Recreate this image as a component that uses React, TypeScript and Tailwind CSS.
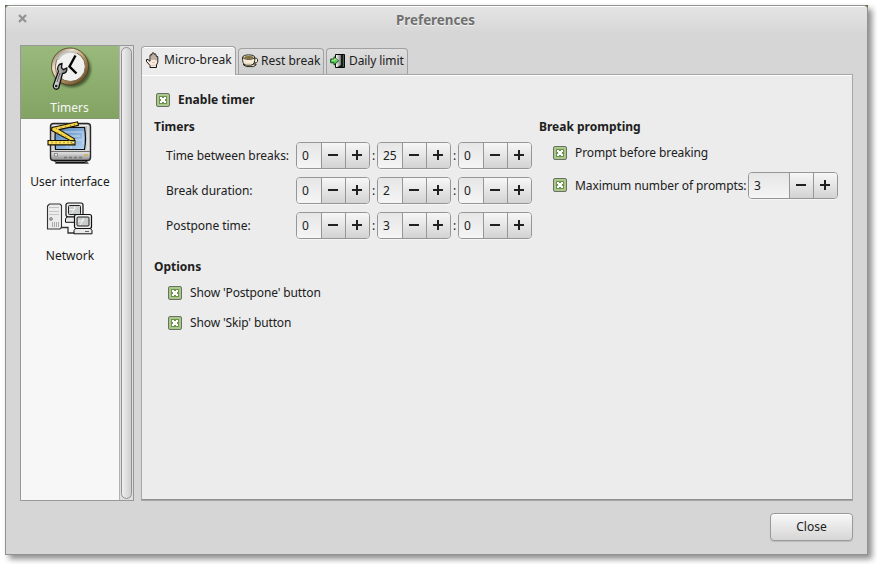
import React from "react";

function Check() {
  return (
    <svg className="h-[14px] w-[14px] shrink-0" viewBox="0 0 14 14" shapeRendering="crispEdges">
      <rect x="0.5" y="0.5" width="13" height="13" rx="1.5" fill="#a9c98a" stroke="#6b6f66" shapeRendering="auto" />
      <rect x="3" y="3" width="8" height="8" fill="#6f9151" />
      <path d="M4 4h2v1h2V4h2v2H9v2h1v2H8V9H6v1H4V8h1V6H4z" fill="#fff" />
    </svg>
  );
}

function CheckRow({ label, bold = false, low = false }: { label: string; bold?: boolean; low?: boolean }) {
  return (
    <div className={bold ? "flex h-5 items-center gap-2 font-bold tracking-[0.03px]" : "flex h-5 items-center gap-2"}>
      <Check />
      <span className={low ? "whitespace-nowrap pt-[2px]" : "whitespace-nowrap"}>{label}</span>
    </div>
  );
}

function Sign({ plus = false }: { plus?: boolean }) {
  return (
    <button className="flex h-full w-6 items-start border-l border-[#969696] bg-linear-to-b from-[#f7f7f7] to-[#d3d3d3] pl-[6px] pt-[7px]">
      <svg className="h-[10px] w-[10px]" viewBox="0 0 10 10" shapeRendering="crispEdges">
        <path d={plus ? "M0 4h4V0h2v4h4v2H6v4H4V6H0z" : "M0 4h10v2H0z"} fill="#202020" />
      </svg>
    </button>
  );
}

function Spin({ value, wide = false }: { value: number; wide?: boolean }) {
  return (
    <div
      className={
        (wide ? "w-[90px]" : "w-[74px]") +
        " flex h-[27px] shrink-0 overflow-hidden rounded-[4px] border border-[#969696] shadow-[0_1px_0_#f5f5f5]"
      }
    >
      <div className="flex flex-1 items-center bg-linear-to-b from-[#e6e6e6] to-[#f5f5f5] pl-[5px]">{value}</div>
      <Sign />
      <Sign plus />
    </div>
  );
}

function TimeRow({ label, values }: { label: string; values: number[] }) {
  return (
    <div className="flex h-[27px] items-center">
      <span className="w-[130px] whitespace-nowrap tracking-[-0.04px]">{label}</span>
      <Spin value={values[0]} />
      <span className="w-[7px] text-center">:</span>
      <Spin value={values[1]} />
      <span className="w-[7px] text-center">:</span>
      <Spin value={values[2]} />
    </div>
  );
}

function ClockIcon() {
  return (
    <svg className="h-[48px] w-[48px]" viewBox="0 0 48 48">
      <defs>
        <linearGradient id="rim" x1="0" y1="0" x2="1" y2="1">
          <stop offset="0" stopColor="#5c4a30" />
          <stop offset=".3" stopColor="#efe4cd" />
          <stop offset=".6" stopColor="#a98a5b" />
          <stop offset="1" stopColor="#4a3415" />
        </linearGradient>
        <linearGradient id="steel" x1="0" y1="0" x2="1" y2="0">
          <stop offset="0" stopColor="#e4e4e4" />
          <stop offset="1" stopColor="#777" />
        </linearGradient>
        <filter id="soft" x="-30%" y="-30%" width="160%" height="160%">
          <feGaussianBlur stdDeviation="1.3" />
        </filter>
      </defs>
      <ellipse cx="26" cy="22" rx="19" ry="18.5" fill="#263518" opacity=".65" filter="url(#soft)" />
      <circle cx="24" cy="19.5" r="18.5" fill="url(#rim)" stroke="#4d3b20" strokeWidth=".8" />
      <circle cx="24.3" cy="19.5" r="15" fill="#f0f0ee" stroke="#806d4c" />
      <path d="M12 12.5a14 14 0 0 1 19-6" fill="none" stroke="#c7c7c5" strokeWidth="2" />
      <path d="M29.5 8.5 23.5 19.5l7 7" fill="none" stroke="#050505" strokeWidth="2.4" />
      <path
        d="M16 16.5c-4 .5-5.3 4.5-3.6 8L7.5 38c-.5 2 .5 4 2.5 4.2 1.8.2 2.7-.6 3-2.2l3.5-13.5c3 0 5-2.2 4.3-5.5l-3.4 1.6-1.9-1.9z"
        fill="url(#steel)"
        stroke="#101010"
        strokeWidth="1.3"
      />
      <circle cx="10.2" cy="39" r="1.3" fill="#222" />
      <path d="m14 26-3 9" stroke="#4b4b4b" strokeWidth=".8" />
    </svg>
  );
}

function MonitorIcon() {
  return (
    <svg className="h-[48px] w-[48px]" viewBox="0 0 48 48">
      <defs>
        <linearGradient id="screen" x1="0" y1="0" x2="1" y2="1">
          <stop offset="0" stopColor="#4f82b9" />
          <stop offset="1" stopColor="#b9d7f2" />
        </linearGradient>
        <linearGradient id="case" x1="0" y1="0" x2="0" y2="1">
          <stop offset="0" stopColor="#bdbdbd" />
          <stop offset=".8" stopColor="#dadada" />
          <stop offset="1" stopColor="#888" />
        </linearGradient>
      </defs>
      <path d="M10 41h31l2 3H9z" fill="#222" opacity=".7" />
      <rect x="4.5" y="3.5" width="40" height="37" rx="3" fill="url(#case)" stroke="#292929" strokeWidth="1.4" />
      <path d="M6 5.5h36v24" fill="none" stroke="#eee" strokeWidth="1" />
      <path d="M9.5 7.5h29q2 11 0 22h-29q-1-11 0-22z" fill="url(#screen)" stroke="#111" strokeWidth="1.2" />
      <path d="M21 27V16h13M25 29V20h11M18 12h19v12" fill="none" stroke="#d9eaff" strokeWidth="1.4" opacity=".5" />
      <path d="M5 31.5h39" stroke="#707070" />
      <rect x="8.5" y="33.5" width="3" height="2.5" fill="#eee" stroke="#777" strokeWidth=".7" />
      <path d="M18 37.5h3m2 0h3m2 0h3m2 0h3" stroke="#777" strokeWidth="1.4" />
      <path d="M38 35h4" stroke="#d0b66c" strokeWidth="2" />
      <path d="M8 40.5h33l-2 2H10z" fill="#777" stroke="#111" />
      <path d="m6 7.5 25.5-5.7 1 3.6-19.2 4.2 15.2 9.3-1.6 3L5.5 10.5z" fill="#f6d64b" stroke="#151000" strokeWidth="1.1" />
      <path d="M2 20.5h27v4.4H2z" fill="#ffe05d" stroke="#151000" strokeWidth="1.1" />
      <path d="m10 7.5.7 1.7m4-2.6.7 1.7m4-2.6.7 1.7m4-2.6.7 1.7m3.5-2.5.6 1.7M12 12l-1 2m5 0-1 2m5 0-1 2m5 1-1 2M6 21.5v2m4-2v2m4-2v2m4-2v2m4-2v2m3-2v2" stroke="#8c742a" strokeWidth=".8" />
      <circle cx="27" cy="22.5" r="1.4" fill="#fff5a5" stroke="#665018" strokeWidth=".6" />
    </svg>
  );
}

function Computer() {
  return (
    <>
      <rect x=".5" y=".5" width="17" height="14" rx="2" fill="#efefef" stroke="#111" strokeWidth="1.2" />
      <rect x="3" y="3" width="12" height="9" rx="1" fill="#c9cdcc" stroke="#222" />
      <path d="M4 7h5V4m-3 7 4-6" stroke="#f4f4f4" fill="none" />
      <path d="M1.5 14.5h15l1.5 2v3.3H0v-3.3z" fill="#e9e9e9" stroke="#111" />
      <path d="M11 17.5h4" stroke="#666" />
    </>
  );
}

function NetworkIcon() {
  return (
    <svg className="h-[48px] w-[48px]" viewBox="0 0 48 48">
      <path d="M15 33.5h7V39h7" fill="none" stroke="#333" strokeWidth="1.3" />
      <path d="m1.5 12 2-2h10.5l1.5 1.5v22L14 35H1.5z" fill="#ececec" stroke="#333" strokeWidth="1.1" />
      <path d="M3 13.5h10m-10 4h10m-10 3h10" stroke="#c4c4c4" />
      <circle cx="5" cy="25" r="1.4" fill="#bbb" stroke="#555" strokeWidth=".6" />
      <path d="M6.5 28v5m2-5v5m2-5v5m2-5v5" stroke="#999" strokeWidth=".8" />
      <g transform="translate(19.5 8.5)"><Computer /></g>
      <g transform="translate(28 20)"><Computer /></g>
    </svg>
  );
}

function HandIcon() {
  return (
    <svg className="h-4 w-4 shrink-0" viewBox="0 0 16 16">
      <path
        d="M5 15.5v-2L1.5 9.5v-2H3l2 1.8V3.2l1-.7 1 .7V1.4L8 .6l1 .8v1l1-.7 1 .8v1.8l1-.3.8.8v5.4L11.5 13v2.5z"
        fill="#fbeadb"
        stroke="#0c0c0c"
        strokeWidth=".95"
      />
      <path d="M7 3.2v4.6M9 2.4v5.4M11 4.3v4" stroke="#4b3f37" strokeWidth=".7" />
      <path d="M7 10.5h3M6 13.3h5" stroke="#d3b9a5" strokeWidth=".7" />
    </svg>
  );
}

function CupIcon() {
  return (
    <svg className="h-4 w-4 shrink-0" viewBox="0 0 16 16">
      <path d="M1.5 11h12.5v1l-2.5 1.6h-7L1.5 12z" fill="#d9cfb6" stroke="#1a1710" strokeWidth=".9" />
      <path d="M12.3 5.2h2.2l1 1v2.3l-1.2 1.3h-2.6" fill="#f5ead4" stroke="#1a1710" strokeWidth=".9" />
      <path d="M.6 4.3v3.2Q1.2 12 4.7 12.2h3.8q3.6-.3 4.2-4.7V4.3z" fill="#f8ecd7" stroke="#1a1710" strokeWidth=".9" />
      <ellipse cx="6.7" cy="4.1" rx="6" ry="2.2" fill="#f4ead4" stroke="#1a1710" strokeWidth=".9" />
      <ellipse cx="6.7" cy="4.5" rx="4.5" ry="1.4" fill="#82713c" />
      <path d="m3 8.5 2 2.3h4" fill="none" stroke="#e3cfae" strokeWidth=".9" />
    </svg>
  );
}

function DoorIcon() {
  return (
    <svg className="h-4 w-4 shrink-0" viewBox="0 0 16 16">
      <defs>
        <linearGradient id="door" x1="0" y1="0" x2="1" y2="0">
          <stop stopColor="#fff" />
          <stop offset="1" stopColor="#777" />
        </linearGradient>
      </defs>
      <path d="M5.5 1.5h9v13h-9z" fill="#171e18" stroke="#080808" />
      <path d="M6 2h5v10l-3.5 2H6z" fill="url(#door)" />
      <path d="M13.5 2v12" stroke="#536057" />
      <path d="M.7 6H4V3.7l4.6 4.2L4 12.1V9.8H.7z" fill="#54ca4a" stroke="#07420c" strokeWidth=".9" />
      <path d="M2 7.2h3V5.5l2 2" fill="none" stroke="#b6f7a8" />
    </svg>
  );
}

export default function App() {
  return (
    <main className="h-[564px] w-[877px] overflow-hidden bg-white p-[5px] font-['Noto_Sans',sans-serif] text-[12px] leading-4 tracking-[-0.1px] text-[#202020]">
      <div className="w-[863px] bg-[#4f6f3c] shadow-[4px_4px_6px_rgba(0,0,0,0.45)]">
        <div className="h-[550px] w-[863px] rounded-t-[4px] border border-[#929292] bg-[#d6d6d6] bg-linear-to-b from-[#e5e5e5] to-[#d6d6d6] to-[28px] shadow-[inset_0_1px_0_#fff]">
          <header className="flex h-[39px] items-start pl-[12px] pt-[6px]">
            <svg className="mt-[2px] h-[9px] w-[9px]" viewBox="0 0 9 9">
              <path d="m1 1 7 7m0-7L1 8" stroke="#939393" strokeWidth="2.3" />
            </svg>
            <h1 className="flex-1 pr-[23px] text-center text-[13.33px] font-bold leading-4 tracking-normal text-[#707070] [text-shadow:0_1px_0_#f4f4f4]">Preferences</h1>
          </header>

          <div className="flex gap-[7px] px-[14px]">
            <aside className="flex h-[456px] w-[114px] border border-[#989898] bg-[#f7f7f7]">
              <nav className="w-[98px] text-center tracking-normal">
                <div className="flex h-[73px] flex-col items-center border-b border-[#83986f] bg-linear-to-b from-[#9aba7d] to-[#82a363] pt-px text-[#f7f7f7]">
                  <ClockIcon />
                  <span className="mt-[5px] pr-px">Timers</span>
                </div>
                <div className="flex h-[74px] flex-col items-center pt-px">
                  <MonitorIcon />
                  <span className="mt-[6px] whitespace-nowrap">User interface</span>
                </div>
                <div className="flex h-[74px] flex-col items-center pt-px">
                  <NetworkIcon />
                  <span className="mt-[6px]">Network</span>
                </div>
              </nav>
              <div className="flex w-[14px] justify-center border-l border-[#b2b2b2] bg-[#dedede] py-[1px]">
                <div className="w-[11px] rounded-full border border-[#929292] bg-linear-to-r from-[#efefef] to-[#cecece]" />
              </div>
            </aside>

            <section className="w-[712px] pt-px">
              <div className="flex h-[28px] items-end gap-[2px]">
                <div className="z-10 -mb-px flex h-[29px] w-[95px] items-center gap-[3px] rounded-t-[4px] border border-b-0 border-[#a1a1a1] bg-[#ececec] pb-[2px] pl-[3px] tracking-normal shadow-[inset_0_1px_0_#fff]">
                  <HandIcon />
                  <span className="whitespace-nowrap">Micro-break</span>
                </div>
                <div className="flex h-[26px] w-[86px] items-center gap-[3px] rounded-t-[4px] border border-b-0 border-[#a1a1a1] bg-linear-to-b from-[#dedede] to-[#cecece] pb-[2px] pl-[3px] tracking-normal">
                  <CupIcon />
                  <span className="whitespace-nowrap">Rest break</span>
                </div>
                <div className="flex h-[26px] w-[82px] items-center gap-[3px] rounded-t-[4px] border border-b-0 border-[#a1a1a1] bg-linear-to-b from-[#dedede] to-[#cecece] pb-[2px] pl-[3px]">
                  <DoorIcon />
                  <span className="whitespace-nowrap">Daily limit</span>
                </div>
              </div>

              <div className="h-[427px] border border-[#a6a6a6] bg-[#ececec] pl-3 pt-[15px] shadow-[inset_0_1px_0_#fff,inset_0_-1px_0_#909090]">
                <div className="pl-[2px]"><CheckRow label="Enable timer" bold /></div>
                <div className="mt-[9px] flex">
                  <div className="w-[385px]">
                    <h2 className="font-bold tracking-normal">Timers</h2>
                    <div className="mt-[7px] flex flex-col gap-2 pl-3">
                      <TimeRow label="Time between breaks:" values={[0, 25, 0]} />
                      <TimeRow label="Break duration:" values={[0, 2, 0]} />
                      <TimeRow label="Postpone time:" values={[0, 3, 0]} />
                    </div>
                    <h2 className="mt-5 font-bold tracking-normal">Options</h2>
                    <div className="mt-2 flex flex-col gap-[10px] pl-[14px] tracking-[-0.13px]">
                      <CheckRow label="Show 'Postpone' button" />
                      <CheckRow label="Show 'Skip' button" />
                    </div>
                  </div>
                  <div>
                    <h2 className="font-bold tracking-normal">Break prompting</h2>
                    <div className="mt-2 pl-[14px]">
                      <CheckRow label="Prompt before breaking" />
                      <div className="mt-[9px] flex h-[27px] items-start">
                        <div className="w-[195px] pt-[3px]"><CheckRow label="Maximum number of prompts:" low /></div>
                        <Spin value={3} wide />
                      </div>
                    </div>
                  </div>
                </div>
              </div>
            </section>
          </div>

          <footer className="flex justify-end pr-[14px] pt-[12px]">
            <button className="h-[28px] w-[83px] rounded-[4px] border border-[#999] bg-linear-to-b from-[#f8f8f8] to-[#d6d6d6] tracking-normal shadow-[inset_0_1px_0_#fff,0_1px_1px_#bbb]">Close</button>
          </footer>
        </div>
      </div>
    </main>
  );
}
